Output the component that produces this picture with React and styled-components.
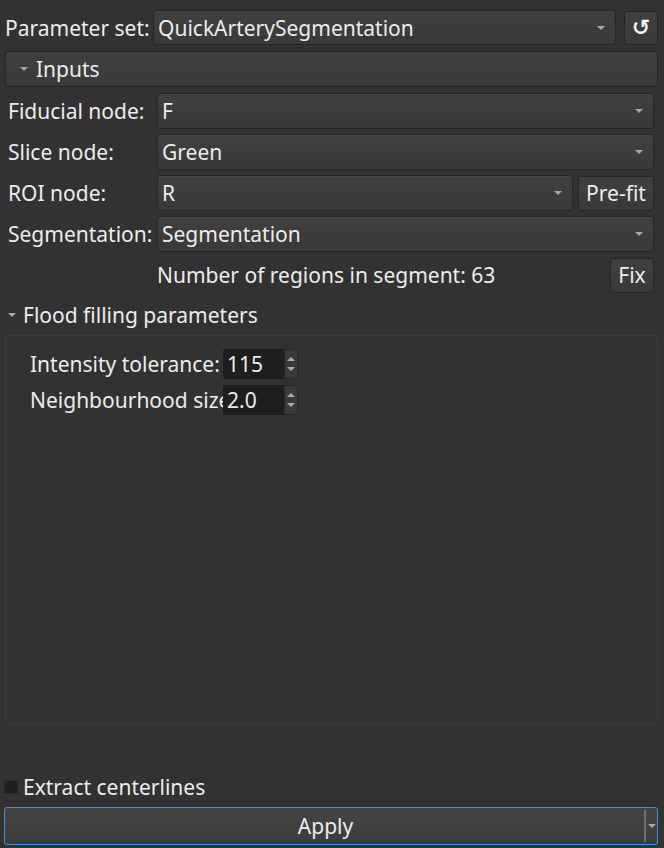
import React from "react";
import styled, { createGlobalStyle } from "styled-components";

const Global = createGlobalStyle`
  html, body { margin: 0; padding: 0; background: #323232; }
  body { font-family: "Noto Sans", "DejaVu Sans", sans-serif; color: #ececec; }
  * { box-sizing: border-box; }
`;

const Page = styled.div`
  height: 848px;
  display: flex;
  flex-direction: column;
  padding: 10px 6px 3px 5px;
  font-size: 21px;
`;

const TopRow = styled.div`
  display: flex;
  align-items: center;
  height: 35px;
`;

const TopLabel = styled.div`
  width: 148px;
  white-space: nowrap;
`;

const ComboBox = styled.div`
  flex: 1;
  min-width: 0;
  height: ${(p) => p.$h || 36}px;
  display: flex;
  align-items: center;
  padding: 0 10px 0 4px;
  border: 1px solid #262626;
  border-radius: 3px;
  background: linear-gradient(#404040, #393939);
  box-shadow: inset 0 1px 0 rgba(255, 255, 255, 0.04);
  white-space: nowrap;
`;

const ComboText = styled.span`
  flex: 1;
  overflow: hidden;
`;

const Arrow = styled.span`
  width: 0;
  height: 0;
  border-left: 4px solid transparent;
  border-right: 4px solid transparent;
  border-top: 4px solid #a8a8a8;
`;

const ToolButton = styled.button`
  width: ${(p) => p.$w}px;
  height: ${(p) => p.$h || 35}px;
  margin-left: ${(p) => p.$ml || 0}px;
  flex: none;
  border: 1px solid #262626;
  border-radius: 3px;
  background: linear-gradient(#404040, #393939);
  color: #ececec;
  font: inherit;
  padding: 0;
  display: flex;
  align-items: center;
  justify-content: center;
`;

const ResetGlyph = styled.span`
  font-family: "DejaVu Sans", sans-serif;
  font-size: 22px;
  line-height: 1;
  color: #f4f8ff;
  -webkit-text-stroke: 0.4px #f4f8ff;
`;

const CollapseButton = styled.div`
  margin-top: 6px;
  height: 36px;
  display: flex;
  align-items: center;
  padding-left: 14px;
  border: 1px solid #262626;
  border-radius: 3px;
  background: linear-gradient(#404040, #393939);
`;

const SmallArrow = styled.span`
  width: 0;
  height: 0;
  border-left: 4px solid transparent;
  border-right: 4px solid transparent;
  border-top: 4px solid #a8a8a8;
  margin-right: ${(p) => p.$mr}px;
`;

const Section = styled.div`
  display: flex;
  flex-direction: column;
  gap: 5px;
  padding: 6px 4px 0 3px;
`;

const FormRow = styled.div`
  display: flex;
  align-items: center;
  height: 36px;
`;

const FormLabel = styled.div`
  width: 149px;
  white-space: nowrap;
`;

const InfoText = styled.div`
  flex: 1;
  white-space: nowrap;
`;

const GroupHeader = styled.div`
  margin-top: 6px;
  height: 32px;
  display: flex;
  align-items: center;
  padding-left: 3px;
`;

const GroupBox = styled.div`
  flex: 1;
  margin-top: 4px;
  margin-bottom: 52px;
  border: 1px solid #3c3c3c;
  border-radius: 3px;
  padding: 13px 0 0 24px;
  display: flex;
  flex-direction: column;
  gap: 6px;
`;

const ParamRow = styled.div`
  display: flex;
  align-items: center;
  height: 30px;
`;

const ParamLabel = styled.div`
  width: 193px;
  white-space: nowrap;
  overflow: hidden;
`;

const SpinBox = styled.div`
  width: 75px;
  height: 30px;
  display: flex;
  background: #1e1e1e;
  border-radius: 3px;
`;

const SpinValue = styled.div`
  flex: 1;
  display: flex;
  align-items: center;
  padding-left: 4px;
`;

const SpinButtons = styled.div`
  width: 14px;
  display: flex;
  flex-direction: column;
  align-items: center;
  justify-content: space-around;
  background: #3a3a3a;
  border: 1px solid #2a2a2a;
  border-radius: 0 3px 3px 0;
  padding: 4px 0;
`;

const Tri = styled.span`
  width: 0;
  height: 0;
  border-left: 4px solid transparent;
  border-right: 4px solid transparent;
  ${(p) => (p.$up ? "border-bottom: 4px solid #a8a8a8;" : "border-top: 4px solid #a8a8a8;")}
`;

const CheckRow = styled.div`
  height: 21px;
  display: flex;
  align-items: center;
  gap: 5px;
  margin-left: -1px;
`;

const CheckBox = styled.span`
  width: 14px;
  height: 14px;
  background: #1e1e1e;
  border: 1px solid #2a2a2a;
`;

const ApplyButton = styled.div`
  margin-top: 10px;
  margin-left: -1px;
  height: 38px;
  display: flex;
  border: 1px solid #3f8fd8;
  border-radius: 3px;
  background: linear-gradient(#444444, #3c3c3c);
`;

const ApplyLabel = styled.div`
  flex: 1;
  display: flex;
  align-items: center;
  justify-content: center;
  padding-left: 2px;
`;

const ApplyMenu = styled.div`
  width: 13px;
  border-left: 2px solid #6e6e6e;
  display: flex;
  align-items: center;
  justify-content: center;
  margin: 2px 0;
`;

function Combo({ value, h }) {
  return (
    <ComboBox $h={h}>
      <ComboText>{value}</ComboText>
      <Arrow />
    </ComboBox>
  );
}

export default function App() {
  return (
    <>
      <Global />
      <Page>
        <TopRow>
          <TopLabel>Parameter set:</TopLabel>
          <Combo value="QuickArterySegmentation" h={35} />
          <ToolButton $w={34} $ml={8} $h={34}>
            <ResetGlyph>↺</ResetGlyph>
          </ToolButton>
        </TopRow>

        <CollapseButton>
          <SmallArrow $mr={8} />
          Inputs
        </CollapseButton>

        <Section>
          <FormRow>
            <FormLabel>Fiducial node:</FormLabel>
            <Combo value="F" />
          </FormRow>
          <FormRow>
            <FormLabel>Slice node:</FormLabel>
            <Combo value="Green" />
          </FormRow>
          <FormRow>
            <FormLabel>ROI node:</FormLabel>
            <Combo value="R" />
            <ToolButton $w={76} $ml={5}>Pre-fit</ToolButton>
          </FormRow>
          <FormRow>
            <FormLabel>Segmentation:</FormLabel>
            <Combo value="Segmentation" />
          </FormRow>
          <FormRow>
            <FormLabel />
            <InfoText>Number of regions in segment: 63</InfoText>
            <ToolButton $w={44}>Fix</ToolButton>
          </FormRow>
        </Section>

        <GroupHeader>
          <SmallArrow $mr={7} />
          Flood filling parameters
        </GroupHeader>

        <GroupBox>
          <ParamRow>
            <ParamLabel>Intensity tolerance:</ParamLabel>
            <SpinBox>
              <SpinValue>115</SpinValue>
              <SpinButtons>
                <Tri $up />
                <Tri />
              </SpinButtons>
            </SpinBox>
          </ParamRow>
          <ParamRow>
            <ParamLabel>Neighbourhood size:</ParamLabel>
            <SpinBox>
              <SpinValue>2.0</SpinValue>
              <SpinButtons>
                <Tri $up />
                <Tri />
              </SpinButtons>
            </SpinBox>
          </ParamRow>
        </GroupBox>

        <CheckRow>
          <CheckBox />
          Extract centerlines
        </CheckRow>

        <ApplyButton>
          <ApplyLabel>Apply</ApplyLabel>
          <ApplyMenu>
            <Arrow />
          </ApplyMenu>
        </ApplyButton>
      </Page>
    </>
  );
}
